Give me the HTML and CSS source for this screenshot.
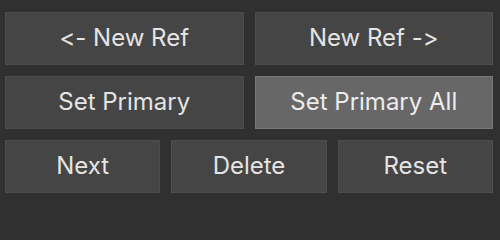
FILE: index.html
```html
<!DOCTYPE html>
<html>
<head>
<meta charset="utf-8">
<link rel="stylesheet" href="styles.css">
</head>
<body>
<div class="panel">
  <div class="row">
    <button class="btn">&lt;- New Ref</button>
    <button class="btn">New Ref -&gt;</button>
  </div>
  <div class="row">
    <button class="btn">Set Primary</button>
    <button class="btn btn-active">Set Primary All</button>
  </div>
  <div class="row">
    <button class="btn">Next</button>
    <button class="btn">Delete</button>
    <button class="btn">Reset</button>
  </div>
</div>
</body>
</html>
```
FILE: styles.css
```css
html, body {
  margin: 0;
  padding: 0;
  background: #303030;
  width: 500px;
  height: 206px;
  overflow: hidden;
}
.panel {
  box-sizing: border-box;
  width: 500px;
  height: 206px;
  padding: 12px 7px 13px 5px;
  display: flex;
  flex-direction: column;
  gap: 11px;
}
.row {
  display: flex;
  gap: 11px;
  height: 53px;
}
.btn {
  flex: 1 1 0;
  min-width: 0;
  box-sizing: border-box;
  margin: 0;
  padding: 0 0 2px 0;
  border: 1px solid #4c4c4c;
  background: #454545;
  color: #e4e4e4;
  font-family: Inter, "Noto Sans", sans-serif;
  font-size: 24px;
  font-weight: 400;
  line-height: 1;
  font-feature-settings: "calt" 0, "liga" 0;
  font-variant-ligatures: none;
  cursor: default;
}
.btn-active {
  background: #676767;
  border-color: #777777;
  color: #ececec;
}
```
